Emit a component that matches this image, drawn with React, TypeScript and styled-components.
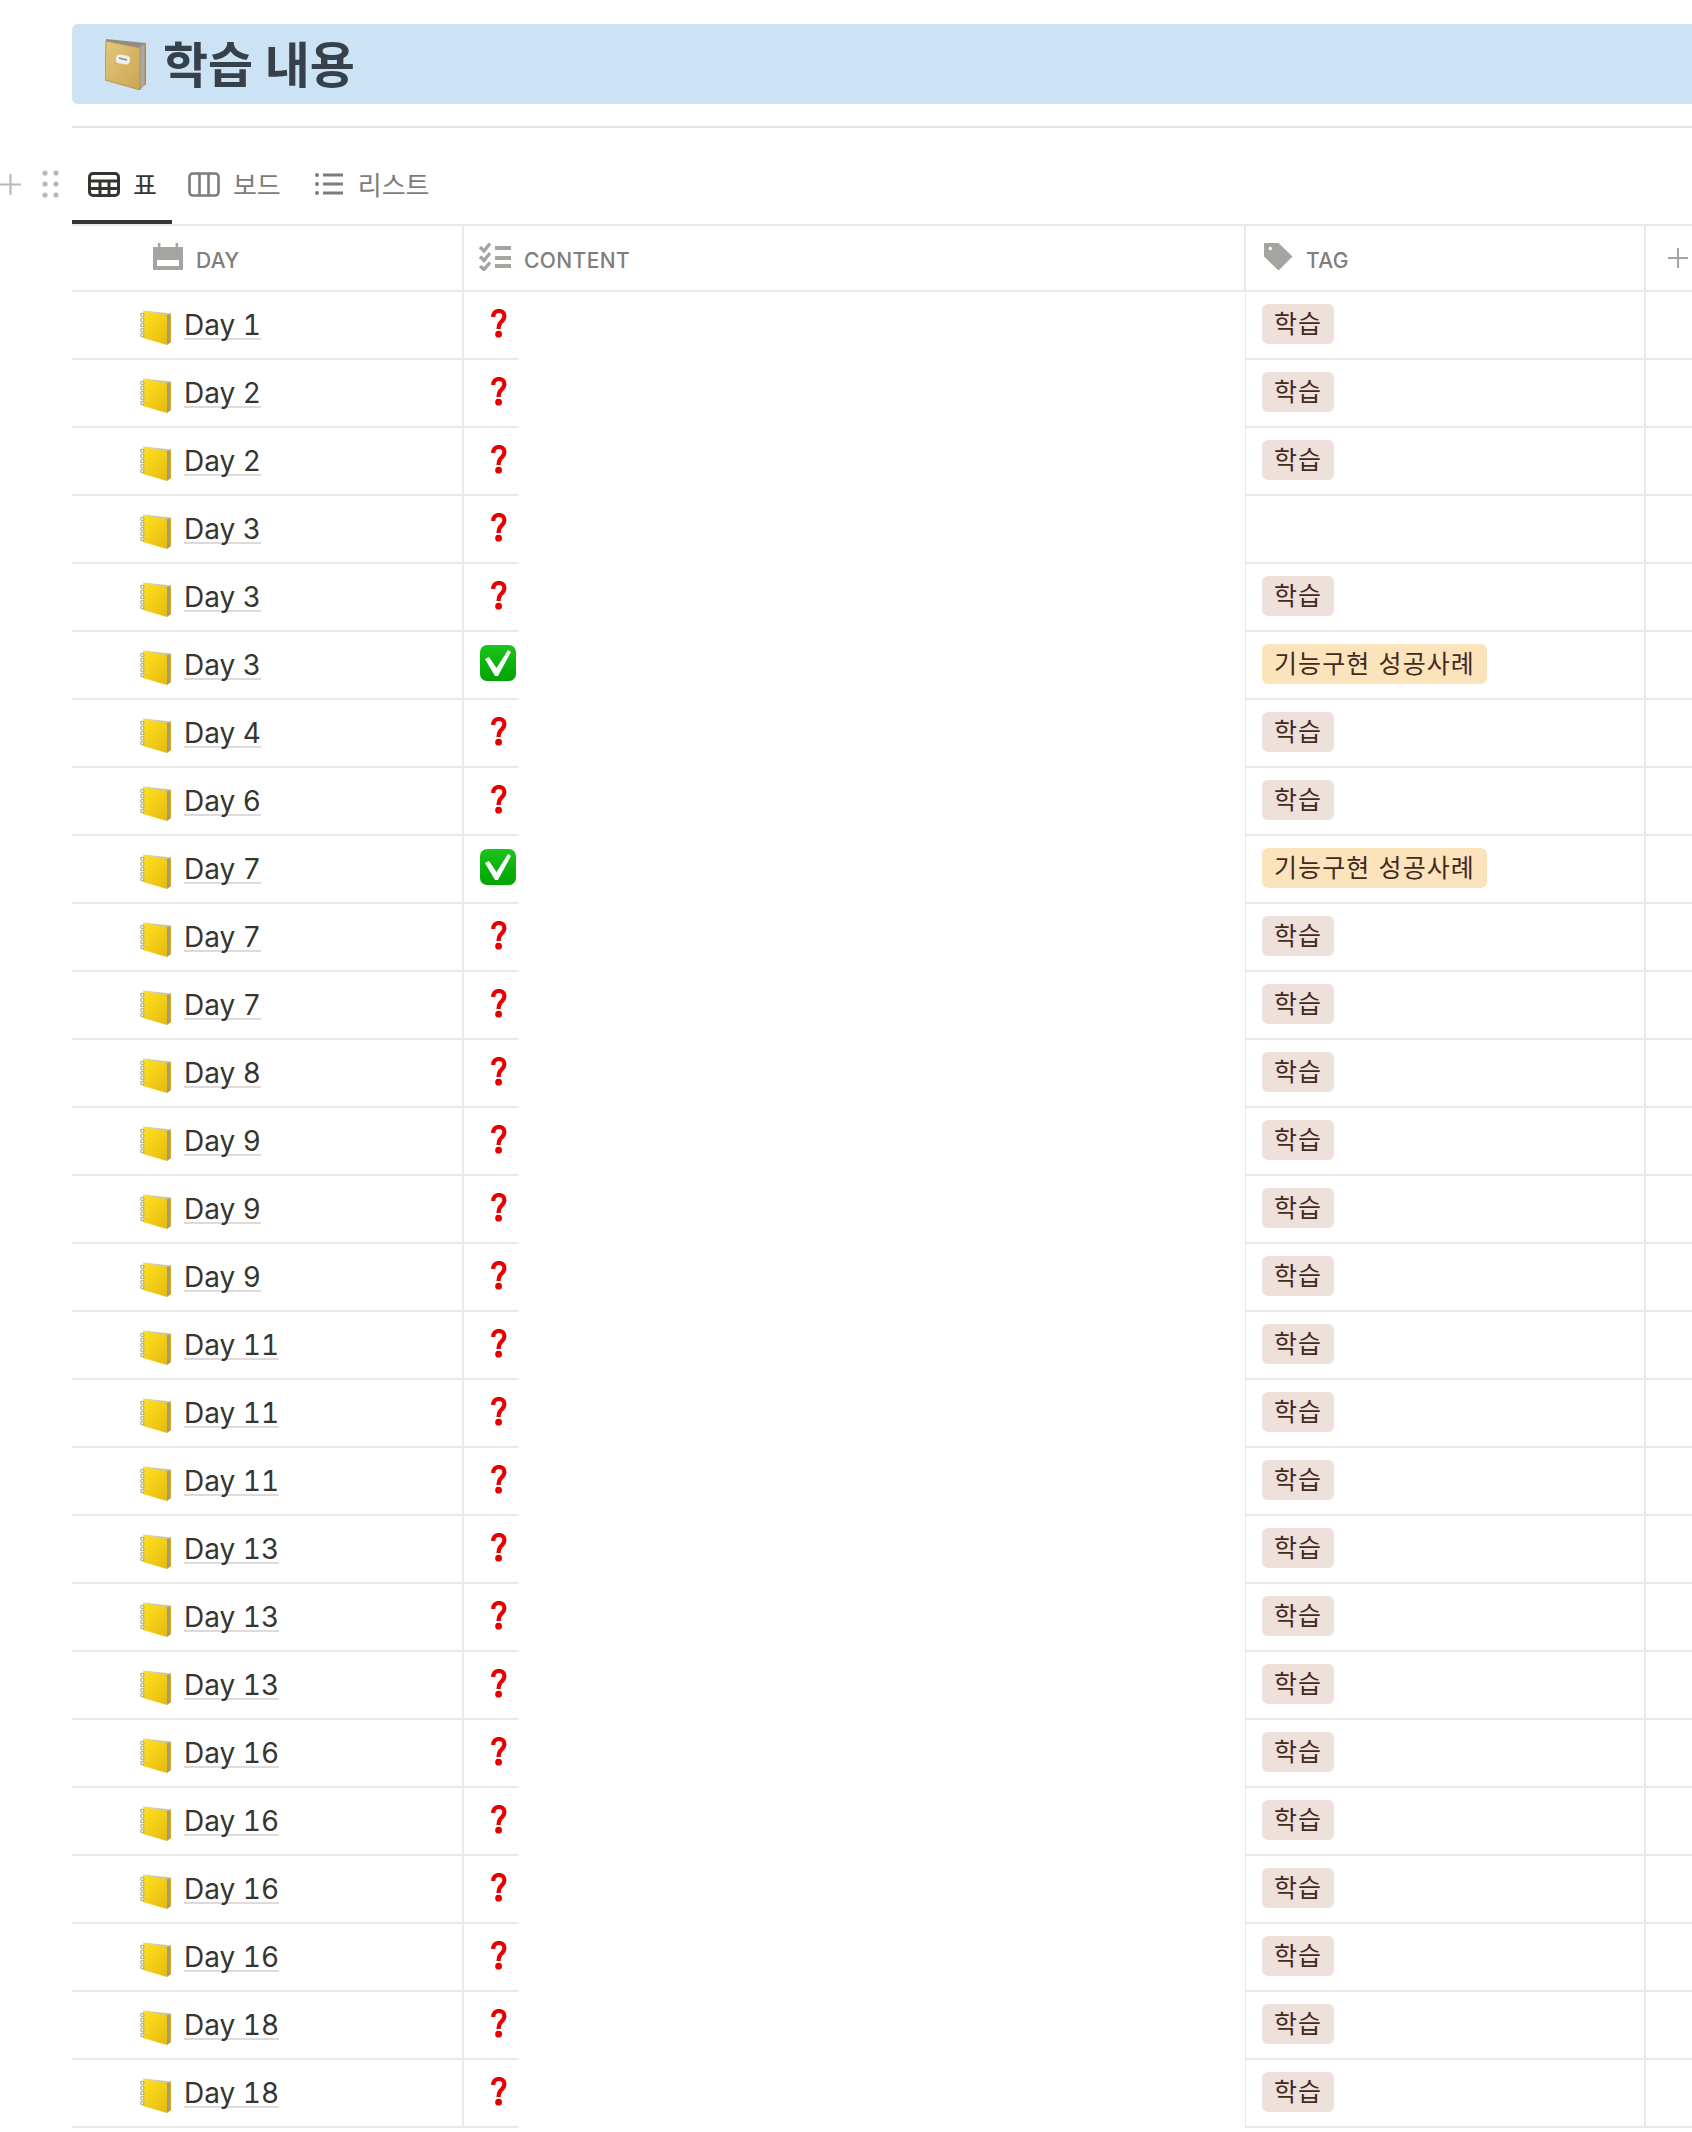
import React from 'react';
import styled, { createGlobalStyle } from 'styled-components';

const GlobalStyle = createGlobalStyle`
  html, body {
    margin: 0;
    background: #fff;
    overflow: hidden;
  }
  body {
    font-family: Inter, "Noto Sans CJK KR", sans-serif;
    color: #37352f;
  }
`

const LINE = '#e9e9e7'
const ICON = '#a5a4a1'

type Row = { day: number, done?: boolean, tag?: 'study' | 'success' }

const rows: Row[] = [
  { day: 1, tag: 'study' },
  { day: 2, tag: 'study' },
  { day: 2, tag: 'study' },
  { day: 3 },
  { day: 3, tag: 'study' },
  { day: 3, done: true, tag: 'success' },
  { day: 4, tag: 'study' },
  { day: 6, tag: 'study' },
  { day: 7, done: true, tag: 'success' },
  { day: 7, tag: 'study' },
  { day: 7, tag: 'study' },
  { day: 8, tag: 'study' },
  { day: 9, tag: 'study' },
  { day: 9, tag: 'study' },
  { day: 9, tag: 'study' },
  { day: 11, tag: 'study' },
  { day: 11, tag: 'study' },
  { day: 11, tag: 'study' },
  { day: 13, tag: 'study' },
  { day: 13, tag: 'study' },
  { day: 13, tag: 'study' },
  { day: 16, tag: 'study' },
  { day: 16, tag: 'study' },
  { day: 16, tag: 'study' },
  { day: 16, tag: 'study' },
  { day: 18, tag: 'study' },
  { day: 18, tag: 'study' },
]

const LedgerIcon = () => (
  <svg width="41" height="51" viewBox="0 0 41 51">
    <defs>
      <linearGradient id="ledger" x1="0" y1="0" x2="1" y2="1">
        <stop offset="0" stopColor="#e3c77c" />
        <stop offset="1" stopColor="#c9a652" />
      </linearGradient>
    </defs>
    <path d="M1 0 L41 4 L35 9 L1 2 Z" fill="#8f8d86" />
    <path d="M35 9 L41 4 L41 45 L35 51 Z" fill="#a9a8a6" />
    <path d="M39.5 5 L41 4 L41 45 L39.5 46.5 Z" fill="#b48c3c" />
    <path d="M1 2 L35 9 L35 51 L0 41 Z" fill="url(#ledger)" stroke="#b08a3a" strokeWidth="0.8" />
    <rect x="11" y="16" width="14" height="9" rx="4" fill="#eef0ee" transform="rotate(8 18 20)" />
    <path d="M14 19 L22 21" stroke="#8b8b88" strokeWidth="1.4" />
  </svg>
)

const NotebookIcon = () => (
  <svg width="31" height="35" viewBox="0 0 31 35">
    <defs>
      <linearGradient id="notebook" x1="0" y1="0" x2="1" y2="1">
        <stop offset="0" stopColor="#ffe21f" />
        <stop offset="1" stopColor="#e6b90e" />
      </linearGradient>
    </defs>
    <path d="M3 0.5 L31 3.4 L27 5.5 L3 1 Z" fill="#c3c4be" />
    <path d="M27 5 L31 3.4 L31 32 L27 35 Z" fill="#9d9b84" />
    <path d="M29.8 4 L31 3.4 L31 32 L29.8 33 Z" fill="#d9b21a" />
    <path d="M3 1 L27 5 L27 35 L3 28 Z" fill="url(#notebook)" />
    <g fill="none" stroke="#aeb48c" strokeWidth="1.2">
      <circle cx="2.4" cy="5" r="1.7" />
      <circle cx="2.4" cy="10" r="1.7" />
      <circle cx="2.4" cy="15" r="1.7" />
      <circle cx="2.4" cy="20" r="1.7" />
      <circle cx="2.4" cy="25" r="1.7" />
    </g>
  </svg>
)

const QuestionIcon = () => (
  <svg width="16" height="29" viewBox="0 0 16 29">
    <path
      d="M2.2 8 C2.2 4 4.5 2 8 2 C11.5 2 13.4 4.2 13.4 7.2 C13.4 10.4 11.2 11.8 9.6 13.6 C8.2 15 7.7 16.6 7.6 20"
      fill="none"
      stroke="#e60000"
      strokeWidth="4.2"
    />
    <circle cx="7.6" cy="25.2" r="3.4" fill="#e60000" />
  </svg>
)

const CheckIcon = () => (
  <svg width="36" height="36" viewBox="0 0 36 36">
    <defs>
      <linearGradient id="check" x1="0" y1="0" x2="0" y2="1">
        <stop offset="0" stopColor="#1cc41c" />
        <stop offset="1" stopColor="#00a400" />
      </linearGradient>
    </defs>
    <rect width="36" height="36" rx="7" fill="url(#check)" />
    <path d="M5 14 L9 12 L16.5 23 L28 5 L31 7 L18 31 L15 31 Z" fill="#fff" />
  </svg>
)

const TableIcon = () => (
  <svg width="32" height="26" viewBox="0 0 32 26" fill="none" stroke="currentColor" strokeWidth="3">
    <rect x="1.5" y="1.5" width="29" height="22" rx="3.5" />
    <path d="M1.5 9 H30.5 M1.5 16.5 H30.5 M12 9 V23.5 M21 9 V23.5" />
  </svg>
)

const BoardIcon = () => (
  <svg width="32" height="26" viewBox="0 0 32 26" fill="none" stroke="currentColor" strokeWidth="2.6">
    <rect x="1.5" y="1.5" width="29" height="22" rx="3.5" />
    <path d="M11.5 1.5 V23.5 M20.5 1.5 V23.5" />
  </svg>
)

const ListIcon = () => (
  <svg width="30" height="24" viewBox="0 0 30 24" fill="currentColor">
    <circle cx="2" cy="3" r="2" />
    <circle cx="2" cy="12" r="2" />
    <circle cx="2" cy="21" r="2" />
    <rect x="8" y="1.5" width="20" height="3" />
    <rect x="8" y="10.5" width="20" height="3" />
    <rect x="8" y="19.5" width="20" height="3" />
  </svg>
)

const PlusIcon = ({ size }: { size: number }) => (
  <svg width={size} height={size} viewBox="0 0 20 20" stroke="currentColor" strokeWidth="2">
    <path d="M10 0 V20 M0 10 H20" />
  </svg>
)

const DotsIcon = () => (
  <svg width="17" height="28" viewBox="0 0 17 28" fill="currentColor">
    <circle cx="3" cy="3" r="2.6" />
    <circle cx="14" cy="3" r="2.6" />
    <circle cx="3" cy="14" r="2.6" />
    <circle cx="14" cy="14" r="2.6" />
    <circle cx="3" cy="25" r="2.6" />
    <circle cx="14" cy="25" r="2.6" />
  </svg>
)

const CalendarIcon = () => (
  <svg width="30" height="27" viewBox="0 0 30 27" fill={ICON}>
    <path
      fillRule="evenodd"
      d="M0 4 H5 V0 H7.5 V4 H22.5 V0 H25 V4 H30 V27 H0 Z M4 17 V23 H26 V17 Z"
    />
  </svg>
)

const ChecklistIcon = () => (
  <svg width="32" height="29" viewBox="0 0 32 29" fill="none" stroke={ICON}>
    <g strokeWidth="3.4">
      <path d="M1 5 L5 9 L11 1.5" />
      <path d="M1 14.5 L5 18.5 L11 11" />
      <path d="M1 24 L5 27.5 L11 20.5" />
    </g>
    <path d="M16 6 H32 M16 16 H32 M16 24 H32" strokeWidth="4" />
  </svg>
)

const TagIcon = () => (
  <svg width="29" height="29" viewBox="0 0 30 30">
    <path
      fillRule="evenodd"
      fill={ICON}
      d="M0 1 H15 L29.5 15 L15 29.5 L0 15 Z M6.5 5 A1.8 1.8 0 1 0 6.5 8.6 A1.8 1.8 0 1 0 6.5 5 Z"
    />
  </svg>
)

export default () => {
  return (
    <Page>
      <GlobalStyle />
      <Banner>
        <LedgerIcon />
        <Title>학습 내용</Title>
      </Banner>
      <Divider />
      <TabBar>
        <BlockHandles>
          <PlusIcon size={21} />
          <DotsIcon />
        </BlockHandles>
        <Tab active>
          <TableIcon />
          <span>표</span>
        </Tab>
        <Tab>
          <BoardIcon />
          <span>보드</span>
        </Tab>
        <Tab>
          <ListIcon />
          <span>리스트</span>
        </Tab>
      </TabBar>
      <Table>
        <HeaderRow>
          <HeaderCell indent={81}>
            <CalendarIcon />
            <span>DAY</span>
          </HeaderCell>
          <HeaderCell indent={15}>
            <ChecklistIcon />
            <span>CONTENT</span>
          </HeaderCell>
          <HeaderCell indent={18}>
            <TagIcon />
            <span>TAG</span>
          </HeaderCell>
          <AddColumn>
            <PlusIcon size={20} />
          </AddColumn>
        </HeaderRow>
        {rows.map((row, i) => (
          <TableRow key={i}>
            <NameCell>
              <NotebookIcon />
              <DayLink>Day {row.day}</DayLink>
            </NameCell>
            <ContentCell>
              <ContentMark done={row.done}>
                {row.done ? <CheckIcon /> : <QuestionIcon />}
              </ContentMark>
            </ContentCell>
            <TagCell>
              {row.tag === 'study' && <Tag>학습</Tag>}
              {row.tag === 'success' && <Tag tone="yellow">기능구현 성공사례</Tag>}
            </TagCell>
            <EmptyCell />
          </TableRow>
        ))}
      </Table>
    </Page>
  )
}

const Page = styled.div`
  width: 1692px;
  height: 2132px;
  box-sizing: border-box;
  padding: 24px 0 0 72px;
  overflow: hidden;
`

const Banner = styled.div`
  height: 80px;
  box-sizing: border-box;
  padding: 0 0 0 33px;
  display: flex;
  align-items: center;
  gap: 17px;
  background: #cce2f5;
  border-radius: 6px 0 0 6px;
`

const Title = styled.h1`
  margin: 4px 0 0;
  font-size: 49px;
  font-weight: 700;
  line-height: 76px;
  color: #37414b;
`

const Divider = styled.div`
  height: 2px;
  margin-top: 22px;
  background: #e3e3e1;
`

const TabBar = styled.div`
  position: relative;
  height: 96px;
  box-sizing: border-box;
  padding-top: 32px;
  display: flex;
  align-items: flex-start;
`

const BlockHandles = styled.div`
  position: absolute;
  left: -72px;
  top: 42px;
  width: 59px;
  display: flex;
  justify-content: space-between;
  align-items: center;
  color: #b9b8b5;
`

const Tab = styled.div<{ active?: boolean }>`
  height: 64px;
  box-sizing: border-box;
  padding: 12px ${props => props.active ? 15 : 18}px 0 16px;
  display: flex;
  align-items: flex-start;
  gap: 13px;
  font-size: 26px;
  line-height: 28px;
  color: ${props => props.active ? '#37352f' : '#7d7c78'};
  border-bottom: 4px solid ${props => props.active ? '#37352f' : 'transparent'};

  svg {
    flex: none;
  }
`

const Table = styled.div`
  border-top: 2px solid ${LINE};
`

const Columns = styled.div`
  display: grid;
  box-sizing: border-box;
  grid-template-columns: 392px 782px 400px 46px;
`

const HeaderRow = styled(Columns)`
  height: 66px;
  border-bottom: 2px solid ${LINE};
`

const HeaderCell = styled.div<{ indent: number }>`
  padding-left: ${props => props.indent}px;
  display: flex;
  align-items: center;
  gap: 13px;
  border-right: 2px solid ${LINE};
  font-size: 21px;
  font-weight: 500;
  letter-spacing: 0.4px;
  color: #7f7e7a;

  svg {
    margin-bottom: 3px;
  }

  span {
    padding-top: 4px;
  }
`

const AddColumn = styled.div`
  padding-left: 22px;
  display: flex;
  align-items: center;
  color: ${ICON};
`

const TableRow = styled(Columns)`
  height: 68px;
`

const NameCell = styled.div`
  padding-left: 68px;
  display: flex;
  align-items: center;
  gap: 13px;
  border-right: 2px solid ${LINE};
  border-bottom: 2px solid ${LINE};

  svg {
    margin-top: 5px;
  }
`

const DayLink = styled.span`
  margin-top: 2px;
  font-size: 28px;
  line-height: 26px;
  font-variant-numeric: tabular-nums;
  color: #37352f;
  border-bottom: 2px solid #dcdbd9;
`

const ContentCell = styled.div`
  border-right: 1px solid ${LINE};
`

const ContentMark = styled.div<{ done?: boolean }>`
  width: 55px;
  height: 68px;
  box-sizing: border-box;
  padding: 0 0 4px ${props => props.done ? 16 : 27}px;
  display: flex;
  align-items: center;
  border-bottom: 2px solid ${LINE};
`

const TagCell = styled.div`
  padding: 12px 0 0 16px;
  border-right: 2px solid ${LINE};
  border-bottom: 2px solid ${LINE};
`

const EmptyCell = styled.div`
  border-bottom: 2px solid ${LINE};
`

const Tag = styled.span<{ tone?: 'yellow' }>`
  display: inline-block;
  height: 40px;
  padding: 0 12px;
  border-radius: 6px;
  font-size: 25px;
  line-height: 40px;
  letter-spacing: 1.1px;
  background: ${props => props.tone === 'yellow' ? '#fbe4bb' : '#eee0da'};
  color: #442a1e;
`
